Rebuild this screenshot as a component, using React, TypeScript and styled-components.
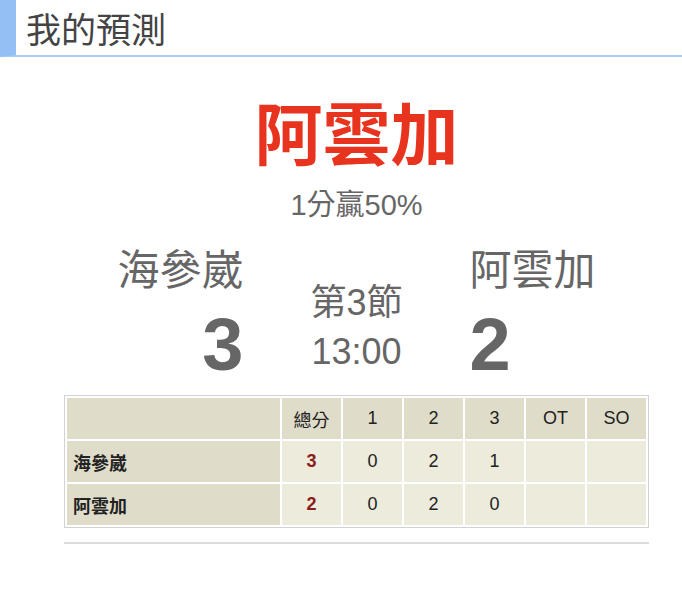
import React from 'react';
import styled, { createGlobalStyle } from 'styled-components';

const GlobalStyle = createGlobalStyle`
  body {
    margin: 0;
    background: #fff;
    font-family: "Liberation Sans", "Noto Sans CJK TC", sans-serif;
  }
`;

interface Row {
  team: string;
  total: number;
  periods: (number | null)[];
}

const rows: Row[] = [
  { team: '海參崴', total: 3, periods: [0, 2, 1, null, null] },
  { team: '阿雲加', total: 2, periods: [0, 2, 0, null, null] },
];

const heads = ['總分', '1', '2', '3', 'OT', 'SO'];

export default function App() {
  return (
    <>
      <GlobalStyle />
      <Header>我的預測</Header>
      <Main>
        <Winner>阿雲加</Winner>
        <Odds>1分贏50%</Odds>
        <Scoreboard>
          <Side $align="right">
            <TeamName>海參崴</TeamName>
            <Score>3</Score>
          </Side>
          <Middle>
            <Period>第3節</Period>
            <Clock>13:00</Clock>
          </Middle>
          <Side $align="left">
            <TeamName>阿雲加</TeamName>
            <Score>2</Score>
          </Side>
        </Scoreboard>
        <Table>
          <thead>
            <tr>
              <HeadCell $first />
              {heads.map(h => (
                <HeadCell key={h}>{h}</HeadCell>
              ))}
            </tr>
          </thead>
          <tbody>
            {rows.map(r => (
              <tr key={r.team}>
                <TeamCell>{r.team}</TeamCell>
                <Cell $total>{r.total}</Cell>
                {r.periods.map((p, i) => (
                  <Cell key={i}>{p ?? ''}</Cell>
                ))}
              </tr>
            ))}
          </tbody>
        </Table>
        <Divider />
      </Main>
    </>
  );
}

const Header = styled.h2`
  margin: 0;
  height: 55px;
  display: flex;
  align-items: center;
  padding-left: 10px;
  border-left: 16px solid #93bff5;
  border-bottom: 2px solid #a9cbf3;
  font-size: 35px;
  font-weight: normal;
  color: #444;
  font-family: "Noto Sans CJK TC", sans-serif;
`;

const Main = styled.div`
  padding: 0 33px 0 64px;
  text-align: center;
  color: #666;
`;

const Winner = styled.div`
  margin-top: 34px;
  font-size: 68px;
  line-height: 80px;
  font-weight: bold;
  color: #e8331f;
  font-family: "Noto Sans CJK TC", sans-serif;
`;

const Odds = styled.div`
  margin-top: 17px;
  font-size: 29px;
  line-height: 34px;
`;

const Scoreboard = styled.div`
  display: flex;
  margin-top: 24px;
`;

const Side = styled.div<{ $align: 'left' | 'right' }>`
  flex: 1;
  display: flex;
  flex-direction: column;
  align-items: ${p => (p.$align === 'right' ? 'flex-end' : 'flex-start')};
  text-align: ${p => p.$align};
`;

const TeamName = styled.div`
  font-size: 42px;
  line-height: 50px;
`;

const Score = styled.div`
  margin-top: 8px;
  font-size: 74px;
  line-height: 82px;
  font-weight: bold;
`;

const Middle = styled.div`
  width: 226px;
  padding-top: 35px;
`;

const Period = styled.div`
  font-size: 36px;
  line-height: 44px;
`;

const Clock = styled.div`
  margin-top: 5px;
  font-size: 36px;
  line-height: 44px;
`;

const Table = styled.table`
  margin-top: 9px;
  width: 100%;
  border: 1px solid #d2d2d2;
  border-spacing: 2px;
  background: #fff;
  font-size: 18px;
  color: #222;
`;

const HeadCell = styled.th<{ $first?: boolean }>`
  height: 41px;
  padding: 0;
  width: ${p => (p.$first ? 'auto' : '59px')};
  background: #dfddc9;
  font-weight: normal;
  text-align: center;
`;

const TeamCell = styled.td`
  height: 41px;
  padding: 0 0 0 6px;
  background: #dfddc9;
  font-weight: bold;
  text-align: left;
`;

const Cell = styled.td<{ $total?: boolean }>`
  height: 41px;
  padding: 0;
  background: #ecebdc;
  text-align: center;
  color: ${p => (p.$total ? '#8b1c1c' : '#222')};
  font-weight: ${p => (p.$total ? 'bold' : 'normal')};
`;

const Divider = styled.div`
  margin-top: 14px;
  border-top: 2px solid #dcdcdc;
`;
